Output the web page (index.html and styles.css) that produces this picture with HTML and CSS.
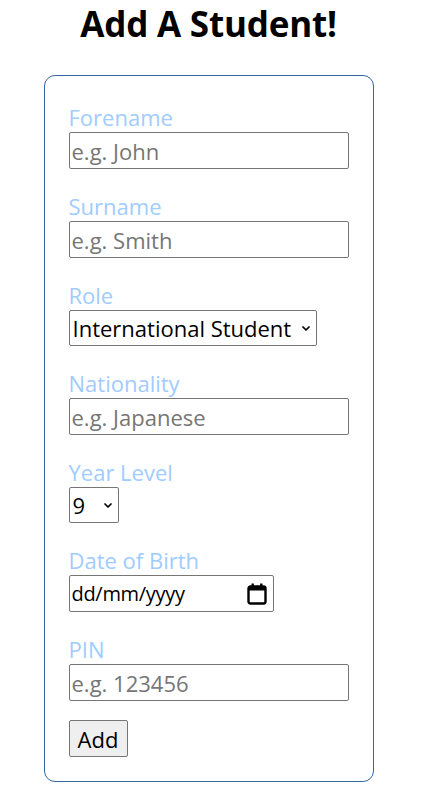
FILE: index.html
```html
<!DOCTYPE html>
<html lang="en">
<head>
<meta charset="utf-8">
<title>Add A Student!</title>
<link rel="stylesheet" href="styles.css">
</head>
<body>
<div class="page">
  <h1 class="title">Add A Student!</h1>
  <form class="card">
    <div class="field">
      <label class="label" for="forename">Forename</label>
      <input class="text-input" id="forename" type="text" placeholder="e.g. John">
    </div>
    <div class="field">
      <label class="label" for="surname">Surname</label>
      <input class="text-input" id="surname" type="text" placeholder="e.g. Smith">
    </div>
    <div class="field">
      <label class="label" for="role">Role</label>
      <span class="select-wrap select-role">
        <select class="select" id="role">
          <option>International Student</option>
          <option>Domestic Student</option>
        </select>
        <svg class="chev" viewBox="0 0 8 5" width="8" height="5"><path d="M1 1 L4 4 L7 1" fill="none" stroke="#000" stroke-width="1.7" stroke-linecap="round" stroke-linejoin="round"/></svg>
      </span>
    </div>
    <div class="field">
      <label class="label" for="nationality">Nationality</label>
      <input class="text-input" id="nationality" type="text" placeholder="e.g. Japanese">
    </div>
    <div class="field">
      <label class="label" for="year">Year Level</label>
      <span class="select-wrap select-year">
        <select class="select" id="year">
          <option>9</option>
          <option>10</option>
          <option>11</option>
          <option>12</option>
        </select>
        <svg class="chev" viewBox="0 0 8 5" width="8" height="5"><path d="M1 1 L4 4 L7 1" fill="none" stroke="#000" stroke-width="1.7" stroke-linecap="round" stroke-linejoin="round"/></svg>
      </span>
    </div>
    <div class="field">
      <label class="label" for="dob">Date of Birth</label>
      <div class="date-input" id="dob">
        <span class="date-text">dd/mm/yyyy</span>
        <svg class="cal" viewBox="0 0 20 22" width="20" height="22"><rect x="1.5" y="3.5" width="17" height="17" rx="2" fill="none" stroke="#000" stroke-width="2.4"/><rect x="1.5" y="3.5" width="17" height="4" fill="#000"/><rect x="4.5" y="0.5" width="2.4" height="4" fill="#000"/><rect x="13.1" y="0.5" width="2.4" height="4" fill="#000"/></svg>
      </div>
    </div>
    <div class="field">
      <label class="label" for="pin">PIN</label>
      <input class="text-input" id="pin" type="text" placeholder="e.g. 123456">
    </div>
    <button class="btn" type="button">Add</button>
  </form>
</div>
</body>
</html>
```
FILE: styles.css
```css
html, body {
  margin: 0;
  padding: 0;
  background: #fff;
}
body {
  font-family: "Open Sans", "Noto Sans", sans-serif;
  color: #000;
}
.page {
  width: 417px;
  display: flex;
  flex-direction: column;
  align-items: center;
}
.title {
  margin: 0;
  font-size: 35px;
  font-weight: 700;
  line-height: 48px;
  letter-spacing: -0.2px;
}
.card {
  margin-top: 27px;
  width: 330px;
  box-sizing: border-box;
  border: 1px solid #3467a3;
  border-radius: 11px;
  padding: 26px 24px 24px;
  display: flex;
  flex-direction: column;
  align-items: flex-start;
}
.field {
  display: flex;
  flex-direction: column;
  align-items: flex-start;
  margin-bottom: 22px;
  width: 100%;
}
.field:nth-last-of-type(1) {
  margin-bottom: 19px;
}
.label {
  color: #a0ccff;
  font-size: 22px;
  line-height: 30px;
}
.text-input,
.date-input {
  width: 100%;
  height: 37px;
  box-sizing: border-box;
  border: 1px solid #767676;
  border-radius: 2px;
  padding: 0 2px;
  font-family: inherit;
  font-size: 22px;
  color: #000;
  background: #fff;
  outline: none;
}
.text-input::placeholder {
  color: #767676;
}
.date-input {
  width: 205px;
  display: flex;
  align-items: center;
  justify-content: space-between;
  padding: 0 6px 0 2px;
}
.date-text {
  font-size: 20px;
  letter-spacing: -0.3px;
}
.cal {
  display: block;
}
.select-wrap {
  position: relative;
  display: inline-block;
}
.select {
  appearance: none;
  -webkit-appearance: none;
  display: block;
  height: 36px;
  box-sizing: border-box;
  border: 1px solid #767676;
  border-radius: 2px;
  background: #fff;
  font-family: inherit;
  font-size: 22px;
  color: #000;
  padding: 0 16px 0 3px;
}
.select-role .select {
  width: 248px;
}
.select-year .select {
  width: 50px;
}
.chev {
  position: absolute;
  right: 7px;
  top: 50%;
  margin-top: -2px;
  pointer-events: none;
}
.btn {
  height: 37px;
  width: 59px;
  box-sizing: border-box;
  border: 1px solid #767676;
  border-radius: 2px;
  background: #efefef;
  font-family: inherit;
  font-size: 22px;
  color: #000;
  padding: 0;
}
```
